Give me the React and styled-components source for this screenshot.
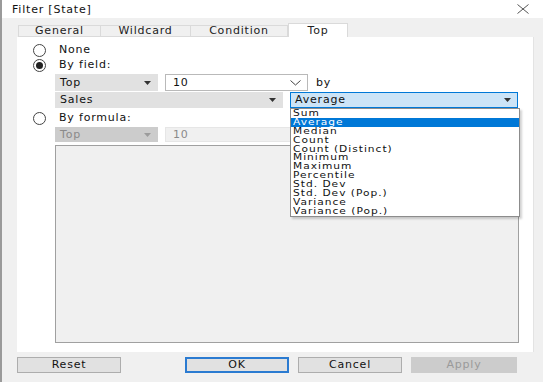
import React from "react";
import styled, { createGlobalStyle } from "styled-components";

const GlobalStyle = createGlobalStyle`
  html, body { margin: 0; padding: 0; background: #f0f0f0; }
  body {
    font-family: "DejaVu Sans", "Liberation Sans", sans-serif;
    font-size: 11px;
    letter-spacing: 0.8px;
    color: #111;
  }
`;

const Dialog = styled.div`
  width: 543px;
  height: 382px;
  box-sizing: border-box;
  border-left: 2px solid #9a9a9a;
  background: #f0f0f0;
  display: flex;
  flex-direction: column;
  overflow: hidden;
`;

const TitleBar = styled.div`
  height: 18px;
  background: #fff;
  display: flex;
  align-items: center;
  justify-content: space-between;
  padding: 0 14px 0 10px;
  font-size: 11px;
`;

const Body = styled.div`
  flex: 1;
  padding: 6px 8px 0 15px;
  display: flex;
  flex-direction: column;
`;

const Tabs = styled.div`
  display: flex;
  height: 13px;
  padding-left: 1px;
  align-items: flex-end;
`;

const Tab = styled.div`
  width: ${(p) => p.$w}px;
  height: ${(p) => (p.$active ? 14 : 12)}px;
  box-sizing: border-box;
  display: flex;
  align-items: center;
  justify-content: center;
  background: ${(p) => (p.$active ? "#fff" : "#f0f0f0")};
  border: 1px solid #dadada;
  border-bottom: ${(p) => (p.$active ? "none" : "1px solid #dadada")};
  border-left: ${(p) => (p.$first || p.$active ? "1px solid #dadada" : "none")};
  color: #222;
  font-size: 11px;
  line-height: 10px;
`;

const Panel = styled.div`
  width: 517px;
  height: 315px;
  box-sizing: border-box;
  background: #fff;
  border-right: 1px solid #e3e3e3;
  padding: 6px 0 0 16px;
  position: relative;
  display: flex;
  flex-direction: column;
`;

const RadioRow = styled.div`
  display: flex;
  align-items: center;
  height: 14px;
  margin-top: ${(p) => p.$mt || 0}px;
  gap: 13px;
  line-height: 12px;
`;

const Radio = styled.span`
  width: 13px;
  height: 13px;
  box-sizing: border-box;
  border-radius: 50%;
  border: 1px solid #444;
  background: #fff;
  display: flex;
  align-items: center;
  justify-content: center;
  &::after {
    content: "";
    display: ${(p) => (p.$checked ? "block" : "none")};
    width: 7px;
    height: 7px;
    border-radius: 50%;
    background: #222;
  }
`;

const FieldRow = styled.div`
  display: flex;
  align-items: center;
  gap: 7px;
  margin-left: 22px;
  margin-top: ${(p) => p.$mt || 0}px;
  height: ${(p) => p.$h || 16}px;
`;

const Select = styled.div`
  width: ${(p) => p.$w}px;
  height: 100%;
  box-sizing: border-box;
  display: flex;
  align-items: center;
  justify-content: space-between;
  padding: 0 6px 0 4px;
  background: ${(p) => (p.$focus ? "#cce4f7" : p.$disabled ? "#cccccc" : "#e1e1e1")};
  border: 1px solid ${(p) => (p.$focus ? "#0078d7" : p.$disabled ? "#cccccc" : "#e1e1e1")};
  color: ${(p) => (p.$disabled ? "#8a8a8a" : "#111")};
  line-height: 12px;
`;

const Combo = styled.div`
  width: ${(p) => p.$w}px;
  height: 100%;
  box-sizing: border-box;
  display: flex;
  align-items: center;
  justify-content: space-between;
  padding: 0 6px 0 7px;
  background: ${(p) => (p.$disabled ? "#f0f0f0" : "#fff")};
  border: 1px solid ${(p) => (p.$disabled ? "#e6e6e6" : "#b9b9b9")};
  color: ${(p) => (p.$disabled ? "#8a8a8a" : "#111")};
  line-height: 12px;
`;

const ByLabel = styled.span`
  margin-left: 1px;
`;

const FormulaBox = styled.div`
  margin: 3px 0 0 22px;
  width: 464px;
  height: 198px;
  box-sizing: border-box;
  background: #f0f0f0;
  border: 1px solid #a0a0a0;
`;

const Menu = styled.div`
  position: absolute;
  left: 273px;
  top: 71px;
  width: 230px;
  box-sizing: border-box;
  background: #fff;
  border: 1px solid #8c8c8c;
  box-shadow: 2px 2px 2px rgba(0, 0, 0, 0.18);
  padding: 0;
`;

const MenuItem = styled.div`
  height: 8.9px;
  padding-left: 2px;
  background: ${(p) => (p.$selected ? "#0078d7" : "transparent")};
  color: ${(p) => (p.$selected ? "#fff" : "#111")};
  white-space: nowrap;
  overflow: visible;
  display: flex;
  align-items: center;
`;

const MenuText = styled.span`
  display: inline-block;
  font-size: 8.5px;
  line-height: 9px;
  letter-spacing: 0.8px;
  transform: scaleX(1.25);
  transform-origin: left center;
`;

const Buttons = styled.div`
  display: flex;
  align-items: center;
  height: 16px;
  margin-top: 5px;
  padding-left: 0;
`;

const Button = styled.div`
  width: ${(p) => p.$w || 104}px;
  height: 16px;
  box-sizing: border-box;
  margin-left: ${(p) => p.$ml || 0}px;
  display: flex;
  align-items: center;
  justify-content: center;
  background: ${(p) => (p.$disabled ? "#cccccc" : "#e1e1e1")};
  border: ${(p) => (p.$primary ? "2px solid #2b7bd1" : p.$disabled ? "1px solid #cccccc" : "1px solid #adadad")};
  color: ${(p) => (p.$disabled ? "#9a9a9a" : "#111")};
  line-height: 12px;
`;

const Arrow = () => (
  <svg width="7" height="4" viewBox="0 0 7 4">
    <path d="M0 0 H7 L3.5 4 Z" fill="#333" />
  </svg>
);

const DimArrow = () => (
  <svg width="7" height="4" viewBox="0 0 7 4">
    <path d="M0 0 H7 L3.5 4 Z" fill="#9c9c9c" />
  </svg>
);

const Chevron = () => (
  <svg width="11" height="6" viewBox="0 0 11 6">
    <path d="M0.5 0.5 L5.5 5 L10.5 0.5" fill="none" stroke="#444" strokeWidth="1" />
  </svg>
);

const CloseIcon = () => (
  <svg width="12" height="10" viewBox="0 0 12 10">
    <path d="M0.5 0.5 L11.5 9.5 M11.5 0.5 L0.5 9.5" stroke="#555" strokeWidth="1" />
  </svg>
);

const aggregations = [
  "Sum",
  "Average",
  "Median",
  "Count",
  "Count (Distinct)",
  "Minimum",
  "Maximum",
  "Percentile",
  "Std. Dev",
  "Std. Dev (Pop.)",
  "Variance",
  "Variance (Pop.)",
];

const App = () => {
  return (
    <>
      <GlobalStyle />
      <Dialog>
        <TitleBar>
          <span>Filter [State]</span>
          <CloseIcon />
        </TitleBar>
        <Body>
          <Tabs>
            <Tab $w={83} $first>General</Tab>
            <Tab $w={90}>Wildcard</Tab>
            <Tab $w={97}>Condition</Tab>
            <Tab $w={60} $active>Top</Tab>
          </Tabs>
          <Panel>
            <RadioRow>
              <Radio />
              <span>None</span>
            </RadioRow>
            <RadioRow $mt={1}>
              <Radio $checked />
              <span>By field:</span>
            </RadioRow>
            <FieldRow $mt={2} $h={17}>
              <Select $w={103}>
                <span>Top</span>
                <Arrow />
              </Select>
              <Combo $w={143}>
                <span>10</span>
                <Chevron />
              </Combo>
              <ByLabel>by</ByLabel>
            </FieldRow>
            <FieldRow $mt={1} $h={16}>
              <Select $w={228}>
                <span>Sales</span>
                <Arrow />
              </Select>
              <Select $w={228} $focus>
                <span>Average</span>
                <Arrow />
              </Select>
            </FieldRow>
            <RadioRow $mt={3}>
              <Radio />
              <span>By formula:</span>
            </RadioRow>
            <FieldRow $mt={2} $h={15}>
              <Select $w={103} $disabled>
                <span>Top</span>
                <DimArrow />
              </Select>
              <Combo $w={143} $disabled>
                <span>10</span>
              </Combo>
            </FieldRow>
            <FormulaBox />
            <Menu>
              {aggregations.map((a) => (
                <MenuItem key={a} $selected={a === "Average"}>
                  <MenuText>{a}</MenuText>
                </MenuItem>
              ))}
            </Menu>
          </Panel>
          <Buttons>
            <Button $w={104}>Reset</Button>
            <Button $w={104} $ml={64} $primary>OK</Button>
            <Button $w={104} $ml={9}>Cancel</Button>
            <Button $w={106} $ml={9} $disabled>Apply</Button>
          </Buttons>
        </Body>
      </Dialog>
    </>
  );
};

export default App;
